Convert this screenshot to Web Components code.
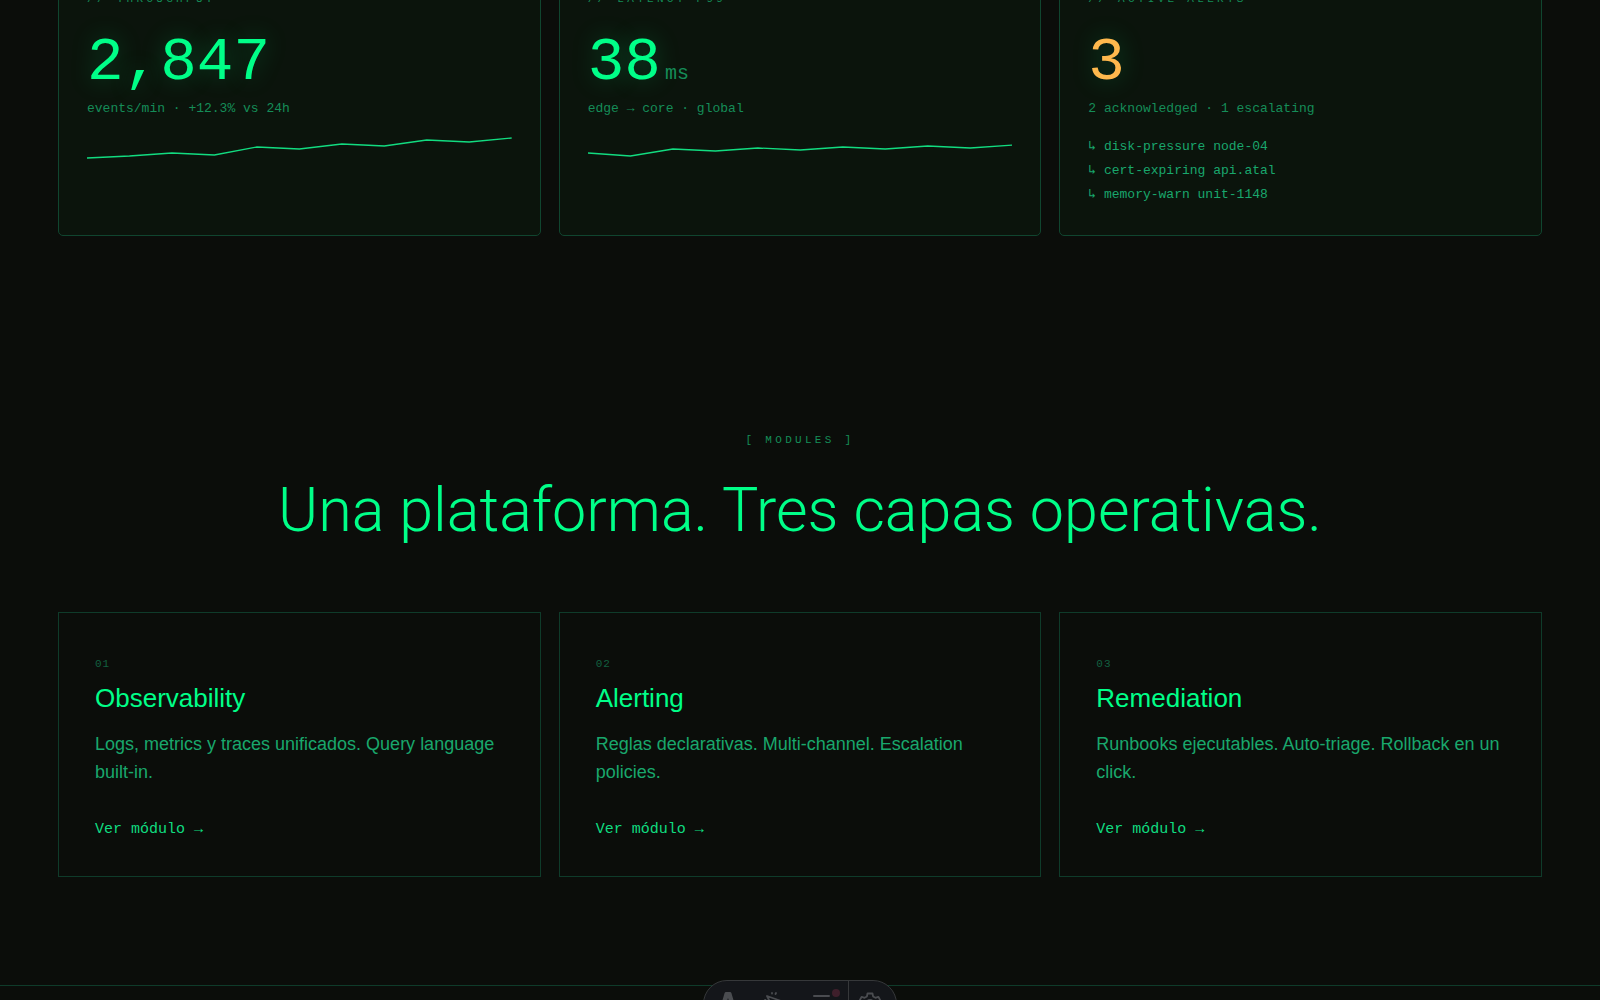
<!DOCTYPE html>
<html lang="es">
<head>
<meta charset="utf-8">
<meta name="viewport" content="width=device-width, initial-scale=1">
<title>Modules</title>
<style>
  :root {
    --bg: #0b0d0a;
    --panel: #0b140c;
    --green: #00ff88;
    --text: #19a76c;
    --muted: #158d58;
    --faint: #126040;
    --line: #0f3b2a;
    --amber: #ffb84d;
    --sans: "Liberation Sans", Arial, sans-serif;
    --mono: "Liberation Mono", "Courier New", "DejaVu Sans Mono", monospace;
  }

  body {
    margin: 0;
    background: var(--bg);
    color: var(--green);
    font-family: var(--sans);
  }
</style>
</head>
<body>
<status-page></status-page>

<script>
class StatusPage extends HTMLElement {

    constructor() {
        super()
        this.shadow = this.attachShadow({ mode: 'open' })
    }

    connectedCallback() {
        this.render()
    }

    render() {
        this.shadow.innerHTML =
        /*html*/`<style>
            :host {
              display: block;
            }
            main {
              margin-top: -40px;
              padding: 0 58px;
            }
            .grid {
              display: grid;
              grid-template-columns: repeat(3, 1fr);
              gap: 18px;
            }
            .modules {
              padding: 194px 0 108px;
            }
            ul {
              list-style: none;
              margin: 0;
              padding: 0;
            }
            footer {
              border-top: 1px solid var(--line);
              height: 14px;
            }
        </style>
        <main>
          <section class="grid">
            <metric-card label="// THROUGHPUT" value="2,847" note="events/min · +12.3% vs 24h">
              <spark-line points="23,21,18,20,12,14,9,11,5,7,3"></spark-line>
            </metric-card>
            <metric-card label="// LATENCY P99" value="38" unit="ms" note="edge → core · global">
              <spark-line points="18,21,14,16,13,15,12,14,11,13,10"></spark-line>
            </metric-card>
            <metric-card label="// ACTIVE ALERTS" value="3" note="2 acknowledged · 1 escalating" level="warn">
              <ul>
                <li>↳ disk-pressure node-04</li>
                <li>↳ cert-expiring api.atal</li>
                <li>↳ memory-warn unit-1148</li>
              </ul>
            </metric-card>
          </section>
          <section class="modules">
            <section-head label="[ MODULES ]">Una plataforma. Tres capas operativas.</section-head>
            <div class="grid">
              <module-card number="01" name="Observability">Logs, metrics y traces unificados. Query language built-in.</module-card>
              <module-card number="02" name="Alerting">Reglas declarativas. Multi-channel. Escalation policies.</module-card>
              <module-card number="03" name="Remediation">Runbooks ejecutables. Auto-triage. Rollback en un click.</module-card>
            </div>
          </section>
        </main>
        <footer></footer>
        <dev-toolbar></dev-toolbar>
        `
    }
}

class MetricCard extends HTMLElement {

    constructor() {
        super()
        this.shadow = this.attachShadow({ mode: 'open' })
    }

    connectedCallback() {
        this.render()
    }

    render() {
        const unit = this.getAttribute('unit')

        this.shadow.innerHTML =
        /*html*/`<style>
            :host {
              display: block;
              box-sizing: border-box;
              padding: 28px;
              border: 1px solid #10452f;
              border-radius: 5px;
              background: var(--panel);
              font-family: var(--mono);
            }
            p {
              margin: 0;
            }
            .label {
              color: var(--muted);
              font-size: 11px;
              line-height: 20px;
              letter-spacing: 0.3em;
            }
            .value {
              margin-top: 23px;
              font-size: 61px;
              line-height: 61px;
              text-shadow: 0 0 24px rgba(0, 255, 136, 0.25);
            }
            :host([level="warn"]) .value {
              color: var(--amber);
            }
            .unit {
              margin-left: 4px;
              color: var(--muted);
              font-size: 20px;
              line-height: 20px;
              text-shadow: none;
            }
            .note {
              margin: 6px 0 16px;
              color: var(--muted);
              font-size: 13px;
              line-height: 20px;
            }
            .extra {
              color: var(--text);
              font-size: 13px;
              line-height: 24px;
            }
        </style>
        <p class="label">${this.getAttribute('label')}</p>
        <p class="value">${this.getAttribute('value')}${unit ? `<span class="unit">${unit}</span>` : ''}</p>
        <p class="note">${this.getAttribute('note')}</p>
        <div class="extra"><slot></slot></div>
        `
    }
}

class SparkLine extends HTMLElement {

    constructor() {
        super()
        this.shadow = this.attachShadow({ mode: 'open' })
    }

    connectedCallback() {
        this.render()
    }

    render() {
        const values = this.getAttribute('points').split(',')
        const points = values.map((value, index) => `${index * 10},${value}`).join(' ')

        this.shadow.innerHTML =
        /*html*/`<style>
            :host {
              display: block;
            }
            svg {
              display: block;
              width: 100%;
              height: 32px;
            }
            polyline {
              fill: none;
              stroke: #12dc80;
              stroke-width: 1.3;
              vector-effect: non-scaling-stroke;
            }
        </style>
        <svg viewBox="0 0 100 32" preserveAspectRatio="none" aria-hidden="true">
          <polyline points="${points}" />
        </svg>
        `
    }
}

class SectionHead extends HTMLElement {

    constructor() {
        super()
        this.shadow = this.attachShadow({ mode: 'open' })
    }

    connectedCallback() {
        this.render()
    }

    render() {
        this.shadow.innerHTML =
        /*html*/`<style>
            :host {
              display: block;
              margin-bottom: 66px;
              text-align: center;
            }
            p {
              margin: 0 0 24px;
              color: var(--muted);
              font-family: var(--mono);
              font-size: 11px;
              line-height: 20px;
              letter-spacing: 0.3em;
            }
            h2 {
              margin: 0;
              font-family: Roboto, var(--sans);
              font-size: 61px;
              font-weight: 300;
              line-height: 72px;
            }
        </style>
        <p>${this.getAttribute('label')}</p>
        <h2><slot></slot></h2>
        `
    }
}

class ModuleCard extends HTMLElement {

    constructor() {
        super()
        this.shadow = this.attachShadow({ mode: 'open' })
    }

    connectedCallback() {
        this.render()
    }

    render() {
        this.shadow.innerHTML =
        /*html*/`<style>
            :host {
              display: block;
              box-sizing: border-box;
              padding: 36px 36px 34px;
              border: 1px solid var(--line);
            }
            .number {
              display: block;
              color: var(--faint);
              font-family: var(--mono);
              font-size: 11px;
              line-height: 30px;
              letter-spacing: 1px;
            }
            h3 {
              margin: 0 0 13px;
              font-size: 26px;
              font-weight: 400;
              line-height: 38px;
            }
            p {
              margin: 0 0 32px;
              color: var(--text);
              font-size: 18px;
              line-height: 28px;
            }
            a {
              display: block;
              width: fit-content;
              color: #10dc80;
              font-family: var(--mono);
              font-size: 15px;
              line-height: 24px;
              text-decoration: none;
            }
        </style>
        <span class="number">${this.getAttribute('number')}</span>
        <h3>${this.getAttribute('name')}</h3>
        <p><slot></slot></p>
        <a href="#">Ver módulo →</a>
        `
    }
}

class DevToolbar extends HTMLElement {

    constructor() {
        super()
        this.shadow = this.attachShadow({ mode: 'open' })
    }

    connectedCallback() {
        this.render()
    }

    render() {
        this.shadow.innerHTML =
        /*html*/`<style>
            :host {
              position: fixed;
              left: 50%;
              bottom: -28px;
              transform: translateX(-50%);
              display: flex;
              box-sizing: border-box;
              width: 194px;
              height: 48px;
              overflow: hidden;
              border: 1px solid #36383a;
              border-radius: 24px;
              background: #14161a;
            }
            button {
              position: relative;
              display: flex;
              flex: 1;
              align-items: center;
              justify-content: center;
              padding: 0;
              border: none;
              background: transparent;
              color: #4a4c50;
              cursor: pointer;
            }
            button:first-child {
              padding-left: 4px;
            }
            button:last-child {
              flex: none;
              width: 48px;
              border-left: 1px solid #36383a;
              padding-right: 6px;
            }
            svg {
              width: 24px;
              height: 24px;
            }
            .dot {
              position: absolute;
              top: 8px;
              right: 8px;
              width: 8px;
              height: 8px;
              border-radius: 50%;
              background: #3e1f2b;
            }
        </style>
        <button aria-label="Menu">
          <svg viewBox="0 0 24 24" fill="currentColor"><path d="M10 0h4q1 0 1.400 1l5 17q-3-1.500-5.400-1.800L12.200 6.500q-.2-.6-.4 0L9 16.200Q6 16.600 3.600 18l5-17Q9 0 10 0zM8 18q4 2 8 0 .5 3-4 6-4.500-3-4-6z"/></svg>
        </button>
        <button aria-label="Inspect">
          <svg viewBox="0 0 24 24" fill="none" stroke="currentColor" stroke-width="1.800" stroke-linecap="round" stroke-linejoin="round"><path d="M3 4l17 6-6 3-3 7zM8 1v.5M12 1l-.5 1M1 8h.5M2 12l1-.5"/></svg>
        </button>
        <button aria-label="Audit">
          <svg viewBox="0 0 24 24" fill="none" stroke="currentColor" stroke-width="2" stroke-linecap="round"><path d="M2 4h15M2 10h17M2 16h9M14 17l2 2 5-5"/></svg>
          <span class="dot"></span>
        </button>
        <button aria-label="Settings">
          <svg viewBox="0 0 24 24" fill="none" stroke="currentColor" stroke-width="1.800" stroke-linejoin="round"><path d="M9.500 1.500h5l.6 3 2.300 1.300 2.900-1 2.500 4.300-2.300 2v2.600l2.300 2-2.500 4.300-2.900-1-2.300 1.300-.6 3h-5l-.6-3-2.300-1.300-2.900 1-2.500-4.300 2.300-2v-2.600l-2.300-2 2.500-4.300 2.900 1 2.300-1.300z"/><circle cx="12" cy="12" r="4"/></svg>
        </button>
        `
    }
}

customElements.define('metric-card', MetricCard);
customElements.define('spark-line', SparkLine);
customElements.define('section-head', SectionHead);
customElements.define('module-card', ModuleCard);
customElements.define('dev-toolbar', DevToolbar);
customElements.define('status-page', StatusPage);
</script>
</body>
</html>
